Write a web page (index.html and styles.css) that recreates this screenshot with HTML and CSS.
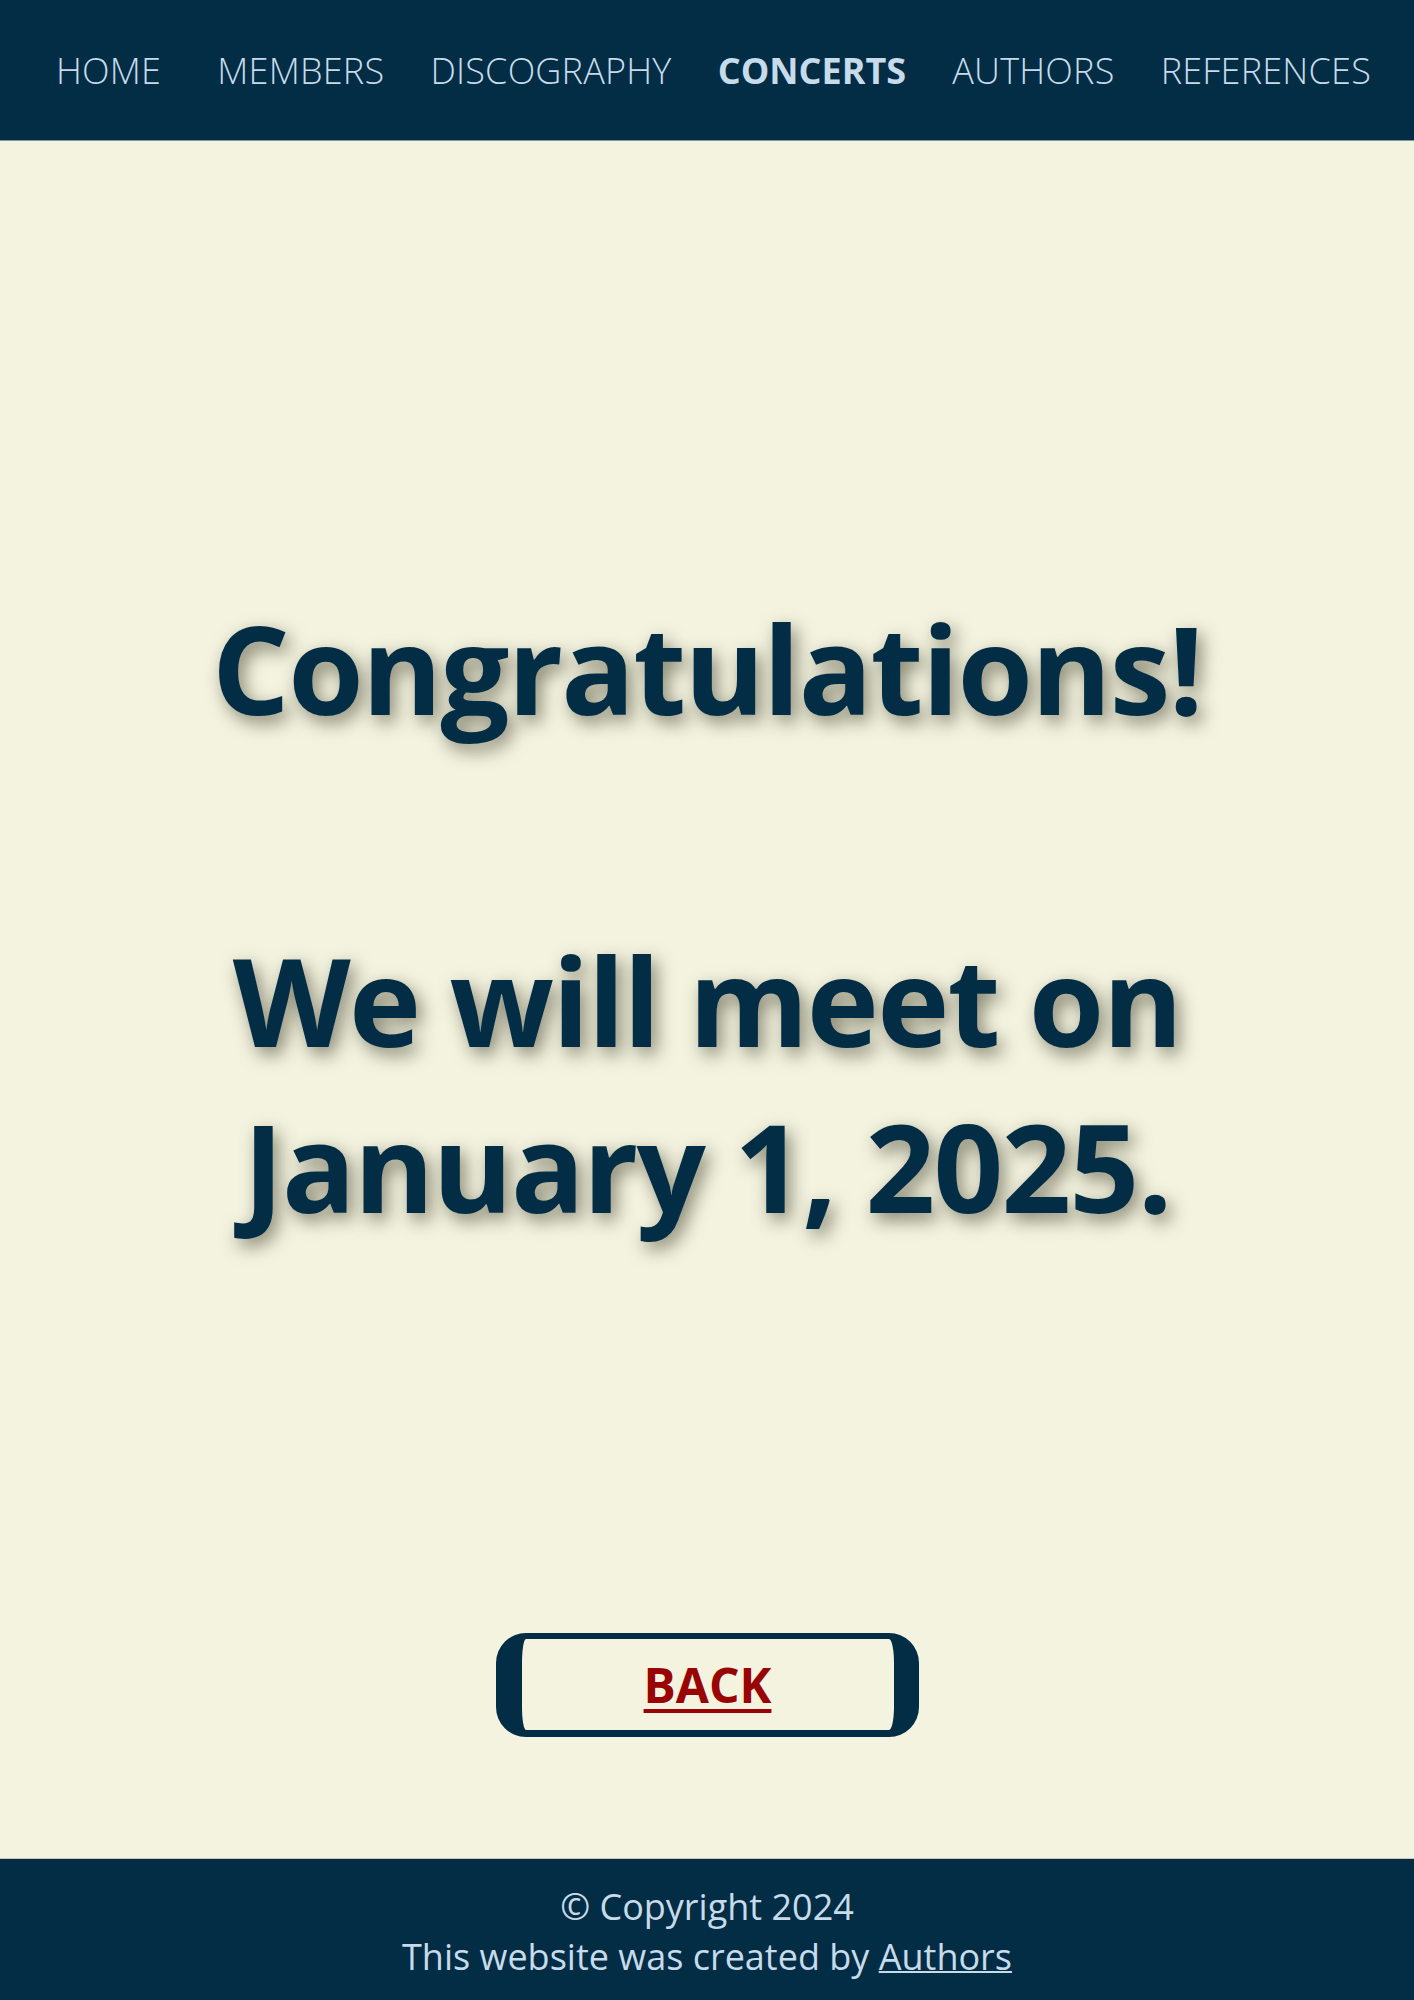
FILE: index.html
```html
<!DOCTYPE html>
<html lang="en">
<head>
<meta charset="utf-8">
<title>Concerts</title>
<link rel="stylesheet" href="styles.css">
</head>
<body>
<header class="topbar">
  <nav class="nav">
    <a class="nav-link" href="#">HOME</a>
    <a class="nav-link nav-members" href="#">MEMBERS</a>
    <a class="nav-link" href="#">DISCOGRAPHY</a>
    <a class="nav-link active" href="#">CONCERTS</a>
    <a class="nav-link" href="#">AUTHORS</a>
    <a class="nav-link" href="#">REFERENCES</a>
  </nav>
</header>
<main class="main">
  <h1 class="message">Congratulations!<br><br>We will meet on<br>January 1, 2025.</h1>
  <div class="back-wrap">
    <a class="back" href="#">BACK</a>
  </div>
</main>
<footer class="footer">
  <p class="foot-line">© Copyright 2024</p>
  <p class="foot-line">This website was created by <a class="foot-link" href="#">Authors</a></p>
</footer>
</body>
</html>
```
FILE: styles.css
```css
html, body {
  margin: 0;
  padding: 0;
}
body {
  background: #f3f3df;
  font-family: "Open Sans", "Liberation Sans", sans-serif;
  color: #022d45;
}
.topbar {
  background: #022d45;
  height: 140px;
  border-bottom: 1px solid #7d9aa6;
  display: flex;
  align-items: center;
}
.nav {
  display: flex;
  justify-content: space-between;
  width: 100%;
  padding: 0 43px 0 56px;
  box-sizing: border-box;
}
.nav-link {
  color: #c7dbea;
  text-decoration: none;
  font-size: 36px;
  font-weight: 300;
  line-height: 49px;
  letter-spacing: 0.2px;
}
.nav-members {
  margin-left: 10px;
}
.nav-link.active {
  font-weight: 700;
  letter-spacing: 0;
}
.main {
  padding-top: 444px;
  display: flex;
  flex-direction: column;
  align-items: center;
}
.message {
  margin: 0;
  text-align: center;
  font-size: 122px;
  line-height: 166px;
  font-weight: 700;
  letter-spacing: -1.7px;
  color: #022d45;
  text-shadow: 5px 7px 18px rgba(40, 40, 20, 0.55);
}
.back-wrap {
  margin-top: 384px;
  margin-bottom: 121px;
  display: flex;
  justify-content: center;
}
.back {
  box-sizing: border-box;
  width: 423px;
  height: 104px;
  border-style: solid;
  border-color: #022d45;
  border-width: 6px 25px 7px 26px;
  border-radius: 30px;
  background: #f3f3df;
  display: flex;
  align-items: center;
  justify-content: center;
  color: #990404;
  font-size: 48px;
  font-weight: 700;
  text-decoration: underline;
  text-decoration-thickness: 4px;
  text-underline-offset: 6px;
}
.footer {
  background: #022d45;
  border-top: 1px solid #c9c6b0;
  height: 142px;
  box-sizing: border-box;
  padding-top: 23px;
  text-align: center;
  color: #c7dbea;
}
.foot-line {
  margin: 0;
  font-size: 36px;
  font-weight: 400;
  line-height: 50px;
}
.foot-link {
  color: #c7dbea;
  text-decoration: underline;
  text-decoration-thickness: 2px;
}
```
